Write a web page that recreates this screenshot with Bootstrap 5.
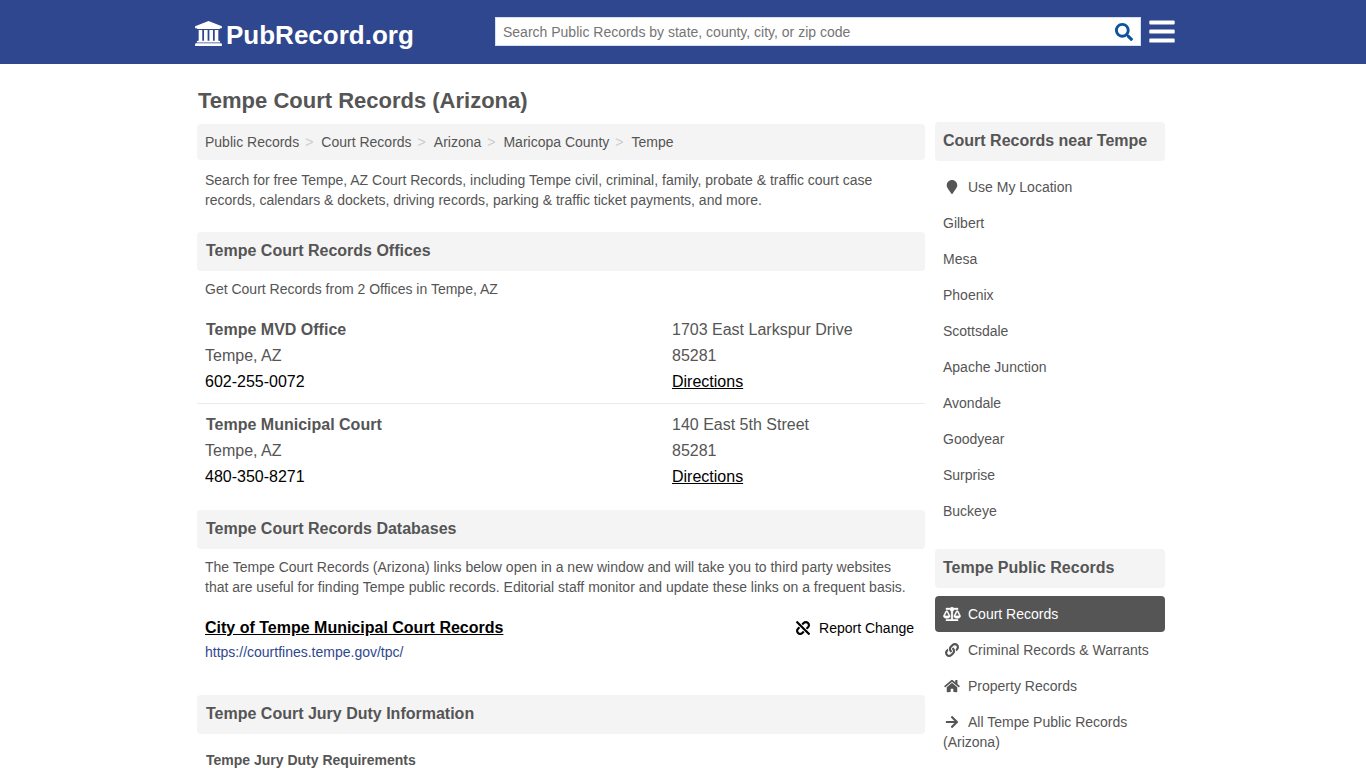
<!DOCTYPE html>
<html lang="en">
<head>
<meta charset="utf-8">
<meta name="viewport" content="width=device-width, initial-scale=1">
<title>Tempe Court Records (Arizona)</title>
<link href="https://cdn.jsdelivr.net/npm/bootstrap@5.3.0/dist/css/bootstrap.min.css" rel="stylesheet">
<style>
body { font-family: "Liberation Sans", Arial, sans-serif; font-size: 14px; line-height: 20px; color: #555; }
a { color: inherit; text-decoration: none; }
a:hover { text-decoration: underline; }
svg { fill: currentColor; }
.site-header { background: #2f478f; min-height: 64px; padding-bottom: 2px; }
.header-inner { max-width: 984px; padding-left: 4px; }
.brand { font-size: 26px; line-height: 32px; font-weight: 700; gap: 4px; padding-top: 8px; }
.brand svg { margin-bottom: 3px; }
.search-box { max-width: 646px; height: 29px; background: #fff; border: 1px solid #d5e0f0; }
.search-box input { font-size: 14px; line-height: 20px; padding: 2px 7px 0; border: 0; border-radius: 0; color: #555; }
.search-box input::placeholder { color: #757575; }
.search-box button { color: #0c529c; padding: 2px 7px 0; }
.page { max-width: 980px; padding: 0 8px 24px 4px; gap: 10px; }
.side-col { width: 230px; padding-top: 58px; }
h1 { font-size: 22px; line-height: 28px; font-weight: 700; margin: 23px 0 9px 1px; }
.bar { font-size: 16px; line-height: 20px; font-weight: 700; background: #f4f4f4; border-radius: 4px; padding: 9px 9px 10px; margin: 0 0 8px; }
.side-col .bar { padding-left: 8px; }
.side-nav + .bar { margin-top: 20px; }
.trail { background: #f4f4f4; border-radius: 4px; padding: 8px; margin: 0; }
.trail .breadcrumb-item + .breadcrumb-item { padding-left: 6px; }
.trail .breadcrumb-item + .breadcrumb-item::before { content: ">"; color: #ccc; padding-right: 8px; }
.trail .breadcrumb-item, .trail .breadcrumb-item.active { color: #555; }
.text-block { padding: 0 8px; margin: 0; }
.intro { margin: 10px 0 22px; }
.office-list { margin: 10px 0 12px; }
.office { font-size: 16px; line-height: 26px; padding: 8px; }
.office + .office { border-top: 1px solid #eaeaea; }
.office h3 { font-size: 16px; line-height: 26px; font-weight: 700; margin: 0 0 0 1px; }
.office-addr { width: 245px; }
.dark-link { color: #000; }
.db-entry { padding: 18px 8px 0; margin-bottom: 33px; }
.db-name { font-size: 16px; line-height: 26px; font-weight: 700; }
.report { line-height: 26px; padding-right: 3px; gap: 9px; }
.url { color: #2f478f; padding-top: 1px; }
.side-nav a { display: block; padding: 8px; border-radius: 4px; }
.side-nav a.current { background: #555; color: #fff; }
.side-nav svg { width: 18px; height: 14px; margin-right: 7px; vertical-align: -2px; }
.sub-head { font-size: 14px; line-height: 20px; font-weight: 700; margin: 0 0 12px; padding: 0 9px; }
</style>
</head>
<body>
<header class="site-header d-flex align-items-center">
  <div class="header-inner container-fluid pe-0 d-flex align-items-center justify-content-between">
    <a class="brand d-flex align-items-center text-white text-decoration-none" href="#">
      <svg width="27" height="25" viewBox="0 0 1920 1792" aria-hidden="true"><path d="M960 0l960 384v128h-128q0 26-20.5 45t-48.5 19h-1526q-28 0-48.5-19t-20.5-45h-128v-128zm-704 640h256v768h128v-768h256v768h128v-768h256v768h128v-768h256v768h59q28 0 48.5 19t20.5 45v64h-1664v-64q0-26 20.5-45t48.5-19h59v-768zm1595 960q28 0 48.5 19t20.5 45v128h-1920v-128q0-26 20.5-45t48.5-19h1782z"/></svg>
      <span>PubRecord.org</span>
    </a>
    <div class="d-flex align-items-center flex-grow-1 justify-content-end ms-4">
      <form class="search-box d-flex flex-grow-1" role="search">
        <input class="form-control shadow-none" type="text" aria-label="Search Public Records" placeholder="Search Public Records by state, county, city, or zip code">
        <button class="btn border-0 d-flex align-items-center" type="button" aria-label="Search">
          <svg width="18" height="18" viewBox="0 0 512 512" aria-hidden="true"><path d="M505 442.7L405.3 343c-4.5-4.5-10.6-7-17-7H372c27.6-35.3 44-79.7 44-128C416 93.1 322.9 0 208 0S0 93.1 0 208s93.1 208 208 208c48.3 0 92.7-16.4 128-44v16.3c0 6.4 2.5 12.5 7 17l99.7 99.7c9.4 9.4 24.6 9.4 33.9 0l28.3-28.3c9.4-9.4 9.4-24.6.1-34zM208 336c-70.7 0-128-57.2-128-128 0-70.7 57.2-128 128-128 70.7 0 128 57.2 128 128 0 70.7-57.2 128-128 128z"/></svg>
        </button>
      </form>
      <button class="btn border-0 p-0 text-white d-flex ms-2" type="button" aria-label="Menu">
        <svg width="26" height="29" viewBox="0 0 448 512" aria-hidden="true"><path d="M16 132h416c8.837 0 16-7.163 16-16V76c0-8.837-7.163-16-16-16H16C7.163 60 0 67.163 0 76v40c0 8.837 7.163 16 16 16zm0 160h416c8.837 0 16-7.163 16-16v-40c0-8.837-7.163-16-16-16H16c-8.837 0-16 7.163-16 16v40c0 8.837 7.163 16 16 16zm0 160h416c8.837 0 16-7.163 16-16v-40c0-8.837-7.163-16-16-16H16c-8.837 0-16 7.163-16 16v40c0 8.837 7.163 16 16 16z"/></svg>
      </button>
    </div>
  </div>
</header>

<div class="page container-fluid d-flex">
  <main class="flex-grow-1">
    <h1>Tempe Court Records (Arizona)</h1>
    <nav aria-label="breadcrumb">
      <ol class="trail breadcrumb">
        <li class="breadcrumb-item"><a href="#">Public Records</a></li>
        <li class="breadcrumb-item"><a href="#">Court Records</a></li>
        <li class="breadcrumb-item"><a href="#">Arizona</a></li>
        <li class="breadcrumb-item"><a href="#">Maricopa County</a></li>
        <li class="breadcrumb-item active" aria-current="page">Tempe</li>
      </ol>
    </nav>
    <p class="text-block intro">Search for free Tempe, AZ Court Records, including Tempe civil, criminal, family, probate &amp; traffic court case records, calendars &amp; dockets, driving records, parking &amp; traffic ticket payments, and more.</p>

    <h2 class="bar">Tempe Court Records Offices</h2>
    <p class="text-block">Get Court Records from 2 Offices in Tempe, AZ</p>
    <div class="office-list">
      <div class="office d-flex justify-content-between">
        <div><h3>Tempe MVD Office</h3><div>Tempe, AZ</div><a class="dark-link" href="#">602-255-0072</a></div>
        <div class="office-addr"><div>1703 East Larkspur Drive</div><div>85281</div><a class="dark-link text-decoration-underline" href="#">Directions</a></div>
      </div>
      <div class="office d-flex justify-content-between">
        <div><h3>Tempe Municipal Court</h3><div>Tempe, AZ</div><a class="dark-link" href="#">480-350-8271</a></div>
        <div class="office-addr"><div>140 East 5th Street</div><div>85281</div><a class="dark-link text-decoration-underline" href="#">Directions</a></div>
      </div>
    </div>

    <h2 class="bar">Tempe Court Records Databases</h2>
    <p class="text-block">The Tempe Court Records (Arizona) links below open in a new window and will take you to third party websites that are useful for finding Tempe public records. Editorial staff monitor and update these links on a frequent basis.</p>
    <div class="db-entry d-flex justify-content-between align-items-start">
      <div>
        <a class="db-name dark-link d-block text-decoration-underline" href="#">City of Tempe Municipal Court Records</a>
        <a class="url d-block" href="#">https://courtfines.tempe.gov/tpc/</a>
      </div>
      <a class="report dark-link d-flex align-items-center" href="#">
        <svg width="14" height="14" viewBox="0 0 512 512" aria-hidden="true"><path d="M304.083 405.907c4.686 4.686 4.686 12.284 0 16.971l-44.674 44.674c-59.263 59.262-155.693 59.266-214.961 0-59.264-59.265-59.264-155.696 0-214.96l44.675-44.675c4.686-4.686 12.284-4.686 16.971 0l39.598 39.598c4.686 4.686 4.686 12.284 0 16.971l-44.675 44.674c-28.072 28.073-28.072 73.75 0 101.823 28.072 28.072 73.75 28.073 101.824 0l44.674-44.674c4.686-4.686 12.284-4.686 16.971 0l39.597 39.598zm-56.568-260.216c4.686 4.686 12.284 4.686 16.971 0l44.674-44.674c28.072-28.075 73.75-28.073 101.824 0 28.072 28.073 28.072 73.75 0 101.823l-44.675 44.674c-4.686 4.686-4.686 12.284 0 16.971l39.598 39.598c4.686 4.686 12.284 4.686 16.971 0l44.675-44.675c59.263-59.265 59.263-155.695 0-214.96-59.266-59.264-155.695-59.264-214.961 0l-44.674 44.674c-4.686 4.686-4.686 12.284 0 16.971l39.597 39.598zm234.828 359.28l22.627-22.627c9.373-9.373 9.373-24.569 0-33.941L63.598 7.029c-9.373-9.373-24.569-9.373-33.941 0L7.029 29.657c-9.373 9.373-9.373 24.569 0 33.941l441.373 441.373c9.373 9.372 24.569 9.372 33.941 0z"/></svg>
        <span>Report Change</span>
      </a>
    </div>

    <h2 class="bar mb-3">Tempe Court Jury Duty Information</h2>
    <h3 class="sub-head">Tempe Jury Duty Requirements</h3>
  </main>

  <aside class="side-col flex-shrink-0">
    <h2 class="bar">Court Records near Tempe</h2>
    <nav class="side-nav" aria-label="Nearby places">
      <a href="#"><svg viewBox="0 0 384 512" aria-hidden="true"><path d="M172.268 501.67C26.97 291.031 0 269.413 0 192 0 85.961 85.961 0 192 0s192 85.961 192 192c0 77.413-26.97 99.031-172.268 309.67-9.535 13.774-29.93 13.773-39.464 0z"/></svg>Use My Location</a>
      <a href="#">Gilbert</a>
      <a href="#">Mesa</a>
      <a href="#">Phoenix</a>
      <a href="#">Scottsdale</a>
      <a href="#">Apache Junction</a>
      <a href="#">Avondale</a>
      <a href="#">Goodyear</a>
      <a href="#">Surprise</a>
      <a href="#">Buckeye</a>
    </nav>
    <h2 class="bar">Tempe Public Records</h2>
    <nav class="side-nav" aria-label="Record types">
      <a class="current" href="#" aria-current="page"><svg viewBox="0 0 640 512" stroke="currentColor" stroke-width="10" aria-hidden="true"><path d="M256 336h-.02c0-16.18 1.34-8.73-85.05-181.51-17.65-35.29-68.19-35.36-85.87 0C-2.06 328.75.02 320.33.02 336H0c0 44.18 57.31 80 128 80s128-35.82 128-80zM128 176l72 144H56l72-144zm511.98 160c0-16.18 1.34-8.73-85.05-181.51-17.65-35.29-68.19-35.36-85.87 0-87.12 174.26-85.04 165.84-85.04 181.51H384c0 44.18 57.31 80 128 80s128-35.82 128-80h-.02zM440 320l72-144 72 144H440zm88 128H352V153.25c23.51-10.29 41.16-31.48 46.39-57.25H528c8.84 0 16-7.16 16-16V48c0-8.84-7.16-16-16-16H383.64C369.04 12.68 346.09 0 320 0s-49.04 12.68-63.64 32H112c-8.84 0-16 7.16-16 16v32c0 8.84 7.16 16 16 16h129.61c5.23 25.76 22.87 46.96 46.39 57.25V448H112c-8.84 0-16 7.16-16 16v32c0 8.84 7.16 16 16 16h416c8.84 0 16-7.16 16-16v-32c0-8.84-7.16-16-16-16z"/></svg>Court Records</a>
      <a href="#"><svg viewBox="0 0 512 512" aria-hidden="true"><path d="M326.612 185.391c59.747 59.809 58.927 155.698.36 214.59-.11.12-.24.25-.36.37l-67.2 67.2c-59.27 59.27-155.699 59.262-214.96 0-59.27-59.26-59.27-155.7 0-214.96l37.106-37.106c9.84-9.84 26.786-3.3 27.294 10.606.648 17.722 3.826 35.527 9.69 52.721 1.986 5.822.567 12.262-3.783 16.612l-13.087 13.087c-28.026 28.026-28.905 73.66-1.155 101.96 28.024 28.579 74.086 28.749 102.325.51l67.2-67.19c28.191-28.191 28.073-73.757 0-101.83-3.701-3.694-7.429-6.564-10.341-8.569a16.037 16.037 0 0 1-6.947-12.606c-.396-10.567 3.348-21.456 11.698-29.806l21.054-21.055c5.521-5.521 14.182-6.199 20.584-1.731a152.482 152.482 0 0 1 20.522 17.197zM467.547 44.449c-59.261-59.262-155.69-59.27-214.96 0l-67.2 67.2c-.12.12-.25.25-.36.37-58.566 58.892-59.387 154.781.36 214.59a152.454 152.454 0 0 0 20.521 17.196c6.402 4.468 15.064 3.789 20.584-1.731l21.054-21.055c8.35-8.35 12.094-19.239 11.698-29.806a16.037 16.037 0 0 0-6.947-12.606c-2.912-2.005-6.64-4.875-10.341-8.569-28.073-28.073-28.191-73.639 0-101.83l67.2-67.19c28.239-28.239 74.3-28.069 102.325.51 27.75 28.3 26.872 73.934-1.155 101.96l-13.087 13.087c-4.35 4.35-5.769 10.79-3.783 16.612 5.864 17.194 9.042 34.999 9.69 52.721.509 13.906 17.454 20.446 27.294 10.606l37.106-37.106c59.271-59.259 59.271-155.699.001-214.959z"/></svg>Criminal Records &amp; Warrants</a>
      <a href="#"><svg viewBox="0 0 576 512" aria-hidden="true"><path d="M280.37 148.26L96 300.11V464a16 16 0 0 0 16 16l112.06-.29a16 16 0 0 0 15.92-16V368a16 16 0 0 1 16-16h64a16 16 0 0 1 16 16v95.64a16 16 0 0 0 16 16.05L464 480a16 16 0 0 0 16-16V300L295.67 148.26a12.19 12.19 0 0 0-15.3 0zM571.6 251.47L488 182.56V44.05a12 12 0 0 0-12-12h-56a12 12 0 0 0-12 12v72.61L318.47 43a48 48 0 0 0-61 0L4.34 251.47a12 12 0 0 0-1.6 16.9l25.5 31A12 12 0 0 0 45.15 301l235.22-193.74a12.19 12.19 0 0 1 15.3 0L530.9 301a12 12 0 0 0 16.9-1.6l25.5-31a12 12 0 0 0-1.7-16.93z"/></svg>Property Records</a>
      <a href="#"><svg viewBox="0 0 448 512" aria-hidden="true"><path d="M190.5 66.9l22.2-22.2c9.4-9.4 24.6-9.4 33.9 0L441 239c9.4 9.4 9.4 24.6 0 33.9L246.6 467.3c-9.4 9.4-24.6 9.4-33.9 0l-22.2-22.2c-9.5-9.5-9.3-25 .4-34.3L311.4 296H24c-13.3 0-24-10.7-24-24v-32c0-13.3 10.7-24 24-24h287.4L190.9 101.2c-9.8-9.3-10-24.8-.4-34.3z"/></svg>All Tempe Public Records (Arizona)</a>
    </nav>
  </aside>
</div>
<script src="https://cdn.jsdelivr.net/npm/bootstrap@5.3.0/dist/js/bootstrap.bundle.min.js"></script>
</body>
</html>
